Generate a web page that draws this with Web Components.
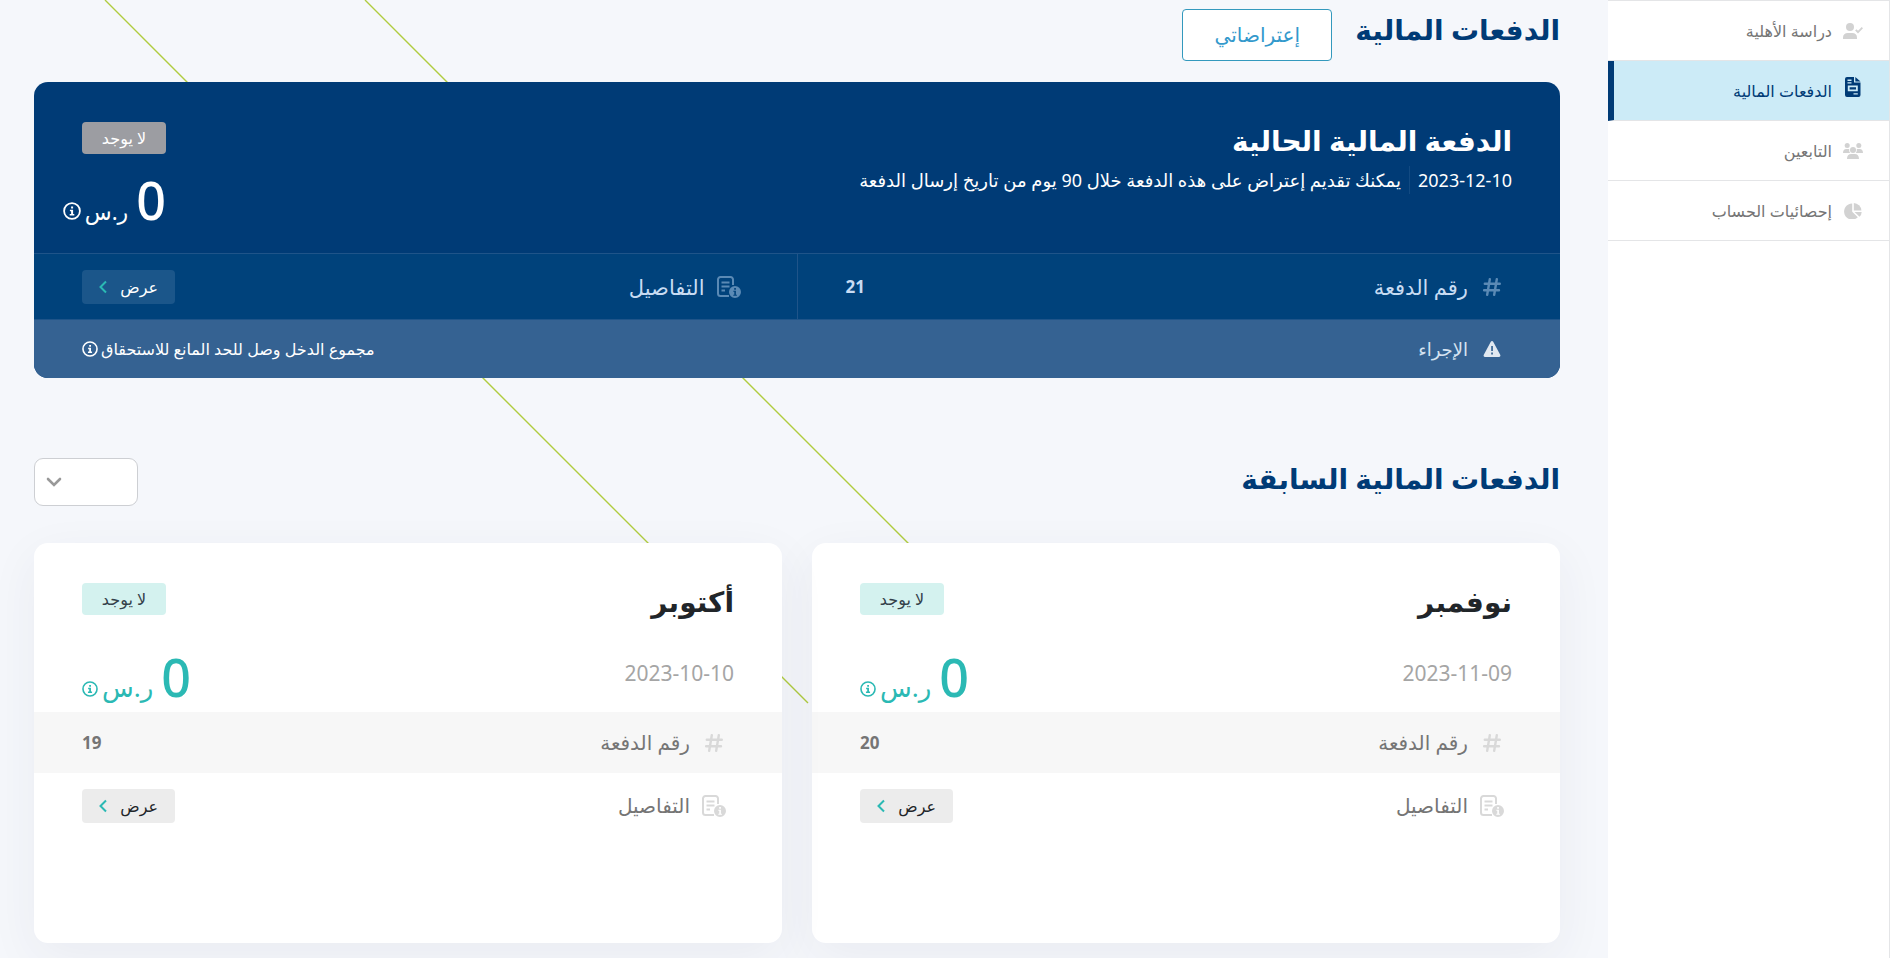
<!DOCTYPE html>
<html lang="ar" dir="rtl">
<head>
    <meta charset="utf-8">
    <meta name="viewport" content="width=device-width, initial-scale=1">
    <title>الدفعات المالية</title>
    <style>
        * {
            box-sizing: border-box;
        }
        body {
            margin: 0;
            min-height: 100vh;
            overflow-x: hidden;
            background: #f5f7fb;
            color: #212529;
            font-family: "Noto Sans", "DejaVu Sans", sans-serif;
            font-size: 16px;
            line-height: 24px;
        }
    </style>
</head>
<body>
    <payments-page></payments-page>

    <script>
        const ICONS = {
            'user-check': {
                box: '0 0 20 16',
                body: `<circle cx="7" cy="4" r="4"/>
                    <path d="M0 16v-1.6C0 11.600 2 10 4.600 10h4.800C12 10 14 11.600 14 14.400V16z"/>
                    <path d="M12.800 6.800l2.200 2.400 4.400-4.600" fill="none" stroke="currentColor" stroke-width="1.900"/>`,
            },
            invoice: {
                box: '0 0 20 28',
                body: `<path fill-rule="evenodd" d="M4 0h7v5.500h6.500V18a2 2 0 0 1-2 2H4a2 2 0 0 1-2-2V2a2 2 0 0 1 2-2zM4.500 2.600v1.400h4V2.600zM4.500 5.200v1.400h4V5.200zM4.800 8.400v5.800h10V8.400zM6.600 10.200h6.400v2.200H6.600zM10.500 16.200v1.400h4.300v-1.400z"/>
                    <path d="M12.300 0l5.200 4.400h-5.200z"/>`,
            },
            users: {
                box: '0 0 20 16',
                body: `<circle cx="4.200" cy="2.600" r="2.500"/><circle cx="15.800" cy="2.600" r="2.500"/><circle cx="10" cy="7" r="3"/>
                    <path d="M0 10c0-2.600 1.200-4 3.400-4h1.800c.4 0 .8.1 1.100.2-.3 1.600.1 2.800 1 3.800zM20 10c0-2.600-1.200-4-3.400-4h-1.800c-.4 0-.8.1-1.100.2.3 1.600-.1 2.800-1 3.800zM4 16c0-3.200 1.600-5 4.200-5h3.600c2.600 0 4.200 1.800 4.200 5z"/>`,
            },
            pie: {
                box: '0 0 20 16',
                body: `<path d="M9.200.6v8.200l5.600 5.400A8 8 0 1 1 9.200.6z"/>
                    <path d="M10.800 0a8 8 0 0 1 7.600 7.400h-7.600z"/>
                    <path d="M11.500 9h7.200a7 7 0 0 1-2.200 4.800z"/>`,
            },
            hash: {
                box: '0 0 18 18',
                body: `<path d="M6.800 1.200L4.200 16.800M13.800 1.200l-2.600 15.600M1.800 5.800h15M1 12.200h15" fill="none" stroke="currentColor" stroke-width="2.400" stroke-linecap="round"/>`,
            },
            details: {
                box: '0 0 24 22',
                body: `<path d="M12 20H3.500A2.500 2.500 0 0 1 1 17.500v-14A2.500 2.500 0 0 1 3.500 1h10A2.500 2.500 0 0 1 16 3.500V9" fill="none" stroke="currentColor" stroke-width="2"/>
                    <path d="M4.500 6.500h8M4.500 10.500h8M4.500 14.500h3.500" stroke="currentColor" stroke-width="1.800"/>
                    <path fill-rule="evenodd" d="M18 10a6 6 0 1 1 0 12 6 6 0 0 1 0-12zM17.200 12v1.700h1.700V12zM16.300 14.800v1h1v2.900h-1v1h3.600v-1h-1v-3.900z"/>`,
            },
            warning: {
                box: '0 0 18 16',
                body: `<path fill-rule="evenodd" d="M9 0c.5 0 .9.300 1.200.8l7 12.900c.6 1.100 0 2.300-1.200 2.300H2c-1.200 0-1.800-1.200-1.200-2.300l7-12.900C8.100.3 8.500 0 9 0zM8.200 5v5h1.700V5zM8.200 11.600v1.800h1.700v-1.800z"/>`,
            },
            info: {
                box: '0 0 18 18',
                body: `<circle cx="9" cy="9" r="7.900" fill="none" stroke="currentColor" stroke-width="1.800"/>
                    <path d="M8.100 4.400h2v2h-2zM6.900 7.700h3.200v4.200h1.200v1.500H6.700v-1.500h1.400V9.200H6.900z"/>`,
            },
            chevron: {
                box: '0 0 8 14',
                body: `<path d="M7 1.500L1.500 7 7 12.500" fill="none" stroke="currentColor" stroke-width="2"/>`,
            },
            'chevron-down': {
                box: '0 0 16 10',
                body: `<path d="M2 2l6 6 6-6" fill="none" stroke="currentColor" stroke-width="2.600" stroke-linecap="round"/>`,
            },
        };

        class AppIcon extends HTMLElement {
            constructor() {
                super();
                this.root = this.attachShadow({ mode: 'open' });
            }
            connectedCallback() {
                const { box, body } = ICONS[this.getAttribute('name')];
                const [, , width, height] = box.split(' ');
                this.root.innerHTML = /*html*/`
                    <style>
                        :host {
                            display: inline-flex;
                            flex: none;
                        }
                        svg {
                            display: block;
                            width: var(--icon-size, ${width}px);
                            height: var(--icon-size, ${height}px);
                        }
                    </style>
                    <svg viewBox="${box}" fill="currentColor" aria-hidden="true">${body}</svg>
                `;
            }
        }
        window.customElements.define('app-icon', AppIcon);

        class NavItem extends HTMLElement {
            constructor() {
                super();
                this.root = this.attachShadow({ mode: 'open' });
                this.root.innerHTML = /*html*/`
                    <style>
                        :host {
                            display: block;
                            box-sizing: border-box;
                            height: 60px;
                            border-bottom: 1px solid #e4e5e7;
                            color: #757575;
                        }
                        a {
                            display: flex;
                            align-items: center;
                            gap: 11px;
                            height: 100%;
                            padding: 0 26px;
                            box-sizing: border-box;
                            color: inherit;
                            text-decoration: none;
                        }
                        app-icon {
                            color: #d2d2d2;
                        }
                        :host([active]) {
                            background: #ccebf7;
                            border-inline-end: 6px solid #003b76;
                            color: #003b76;
                        }
                        :host([active]) app-icon {
                            color: #003b76;
                        }
                    </style>
                    <a href="#"><app-icon name="${this.getAttribute('icon')}"></app-icon><slot></slot></a>
                `;
            }
        }
        window.customElements.define('nav-item', NavItem);

        class SideNav extends HTMLElement {
            constructor() {
                super();
                this.root = this.attachShadow({ mode: 'open' });
                this.root.innerHTML = /*html*/`
                    <style>
                        :host {
                            display: block;
                            background: white;
                            border: solid #e4e5e7;
                            border-width: 1px 1px 0 0;
                        }
                    </style>
                    <nav><slot></slot></nav>
                `;
            }
        }
        window.customElements.define('side-nav', SideNav);

        class StatusBadge extends HTMLElement {
            constructor() {
                super();
                this.root = this.attachShadow({ mode: 'open' });
                this.root.innerHTML = /*html*/`
                    <style>
                        :host {
                            display: inline-block;
                            min-width: 84px;
                            padding: 4px 16px;
                            box-sizing: border-box;
                            border-radius: 4px;
                            background: var(--badge-bg, #d4f2ef);
                            color: var(--badge-color, #33404a);
                            text-align: center;
                            white-space: nowrap;
                        }
                    </style>
                    <slot></slot>
                `;
            }
        }
        window.customElements.define('status-badge', StatusBadge);

        class MoneyAmount extends HTMLElement {
            constructor() {
                super();
                this.root = this.attachShadow({ mode: 'open' });
                this.root.innerHTML = /*html*/`
                    <style>
                        :host {
                            display: flex;
                            align-items: baseline;
                            white-space: nowrap;
                            line-height: 52px;
                        }
                        .value {
                            font-size: 52px;
                            font-weight: 500;
                            margin-inline-end: 8px;
                        }
                        .unit {
                            font-size: var(--unit-size, 26px);
                            margin-inline-end: 4px;
                        }
                    </style>
                    <span class="value"><slot></slot></span>
                    <span class="unit">ر.س</span>
                    <app-icon name="info"></app-icon>
                `;
            }
        }
        window.customElements.define('money-amount', MoneyAmount);

        class ViewButton extends HTMLElement {
            constructor() {
                super();
                this.root = this.attachShadow({ mode: 'open' });
                this.root.innerHTML = /*html*/`
                    <style>
                        button {
                            display: flex;
                            align-items: center;
                            justify-content: space-between;
                            width: 93px;
                            height: 34px;
                            padding: 0 17px;
                            border: 0;
                            border-radius: 4px;
                            background: var(--button-bg, #ececec);
                            color: var(--button-color, #212529);
                            font: inherit;
                            font-size: 16px;
                            cursor: pointer;
                        }
                        app-icon {
                            color: #2bb9b4;
                        }
                    </style>
                    <button type="button"><slot></slot><app-icon name="chevron"></app-icon></button>
                `;
            }
        }
        window.customElements.define('view-button', ViewButton);

        // icon + label at the start of the row, whatever is slotted at the end
        class InfoRow extends HTMLElement {
            constructor() {
                super();
                this.root = this.attachShadow({ mode: 'open' });
                this.root.innerHTML = /*html*/`
                    <style>
                        :host {
                            display: flex;
                            align-items: center;
                            justify-content: space-between;
                            flex: 1;
                            box-sizing: border-box;
                            padding: 0 48px;
                            color: #757575;
                            font-size: 20px;
                        }
                        .label {
                            display: flex;
                            align-items: center;
                            gap: 4px;
                        }
                        .icon {
                            display: flex;
                            justify-content: center;
                            width: 40px;
                            color: var(--row-icon, #d9d9d9);
                        }
                    </style>
                    <div class="label">
                        <span class="icon"><app-icon name="${this.getAttribute('icon')}"></app-icon></span>
                        <span>${this.getAttribute('label')}</span>
                    </div>
                    <slot></slot>
                `;
            }
        }
        window.customElements.define('info-row', InfoRow);

        class CurrentPayment extends HTMLElement {
            constructor() {
                super();
                this.root = this.attachShadow({ mode: 'open' });
                this.root.innerHTML = /*html*/`
                    <style>
                        :host {
                            --badge-bg: #9c9da2;
                            --badge-color: white;
                            --button-bg: #1b568a;
                            --button-color: white;
                            --unit-size: 22px;
                            display: block;
                            overflow: hidden;
                            border-radius: 14px;
                            background: #003b76;
                            color: white;
                        }
                        .top {
                            display: flex;
                            justify-content: space-between;
                            min-height: 171px;
                            box-sizing: border-box;
                            padding: 40px 48px 0;
                        }
                        h2 {
                            margin: 0;
                            font-size: 28px;
                            line-height: 36px;
                        }
                        .meta {
                            display: flex;
                            font-size: 18px;
                            line-height: 28px;
                            margin: 8px 0 0;
                        }
                        time {
                            padding-inline-end: 8px;
                            margin-inline-end: 8px;
                            border-inline-end: 1px solid #124a82;
                        }
                        .state {
                            width: 84px;
                        }
                        money-amount {
                            margin-top: 20px;
                        }
                        .columns {
                            display: flex;
                            height: 67px;
                            box-sizing: border-box;
                            border: solid #1f5489;
                            border-width: 1px 0;
                            background: #00427b;
                        }
                        .columns info-row {
                            --row-icon: #5b8ab5;
                            font-size: 21px;
                            color: #c8dcf3;
                        }
                        .columns info-row + info-row {
                            border-inline-start: 1px solid #1f5489;
                        }
                        b {
                            font-size: 17px;
                        }
                        .action {
                            --row-icon: #e1e8f0;
                            height: 58px;
                            background: #356292;
                            color: #d5e3f1;
                            font-size: 18px;
                        }
                        .reason {
                            --icon-size: 16px;
                            display: flex;
                            align-items: center;
                            gap: 3px;
                            color: white;
                            font-size: 16px;
                        }
                    </style>
                    <div class="top">
                        <div>
                            <h2>الدفعة المالية الحالية</h2>
                            <p class="meta"><time>2023-12-10</time><span>يمكنك تقديم إعتراض على هذه الدفعة خلال 90 يوم من تاريخ إرسال الدفعة</span></p>
                        </div>
                        <div class="state">
                            <status-badge>لا يوجد</status-badge>
                            <money-amount>0</money-amount>
                        </div>
                    </div>
                    <div class="columns">
                        <info-row icon="hash" label="رقم الدفعة"><b>21</b></info-row>
                        <info-row icon="details" label="التفاصيل"><view-button>عرض</view-button></info-row>
                    </div>
                    <info-row class="action" icon="warning" label="الإجراء">
                        <span class="reason">مجموع الدخل وصل للحد المانع للاستحقاق <app-icon name="info"></app-icon></span>
                    </info-row>
                `;
            }
        }
        window.customElements.define('current-payment', CurrentPayment);

        class PaymentCard extends HTMLElement {
            constructor() {
                super();
                this.root = this.attachShadow({ mode: 'open' });
                this.root.innerHTML = /*html*/`
                    <style>
                        :host {
                            display: block;
                            min-height: 400px;
                            box-sizing: border-box;
                            border-radius: 14px;
                            background: white;
                            box-shadow: 0 14px 50px rgba(50, 50, 80, 0.06);
                        }
                        .top {
                            display: flex;
                            justify-content: space-between;
                            height: 169px;
                            box-sizing: border-box;
                            padding: 40px 48px 0;
                        }
                        h3 {
                            margin: 0;
                            font-size: 28px;
                            line-height: 36px;
                        }
                        time {
                            display: block;
                            margin-top: 38px;
                            color: #a5a5a5;
                            font-size: 21px;
                            line-height: 32px;
                        }
                        .state {
                            display: flex;
                            flex-direction: column;
                            align-items: flex-end;
                        }
                        money-amount {
                            --icon-size: 16px;
                            margin-top: 36px;
                            color: #2bb9b4;
                        }
                        info-row {
                            height: 61px;
                        }
                        .number {
                            background: #f7f7f7;
                        }
                        .details {
                            height: 66px;
                        }
                        b {
                            font-size: 17px;
                        }
                    </style>
                    <div class="top">
                        <div>
                            <h3>${this.getAttribute('month')}</h3>
                            <time>${this.getAttribute('date')}</time>
                        </div>
                        <div class="state">
                            <status-badge>لا يوجد</status-badge>
                            <money-amount>${this.getAttribute('amount')}</money-amount>
                        </div>
                    </div>
                    <info-row class="number" icon="hash" label="رقم الدفعة"><b>${this.getAttribute('number')}</b></info-row>
                    <info-row class="details" icon="details" label="التفاصيل"><view-button>عرض</view-button></info-row>
                `;
            }
        }
        window.customElements.define('payment-card', PaymentCard);

        class YearPicker extends HTMLElement {
            constructor() {
                super();
                this.root = this.attachShadow({ mode: 'open' });
                this.root.innerHTML = /*html*/`
                    <style>
                        :host {
                            display: grid;
                            align-items: center;
                            width: 104px;
                            height: 48px;
                        }
                        select, app-icon {
                            grid-area: 1 / 1;
                        }
                        select {
                            appearance: none;
                            width: 100%;
                            height: 100%;
                            padding: 0 14px;
                            border: 1px solid #cdcfd3;
                            border-radius: 9px;
                            background: white;
                            font: inherit;
                        }
                        app-icon {
                            justify-self: end;
                            margin-inline-end: 12px;
                            color: #999;
                            pointer-events: none;
                        }
                    </style>
                    <select aria-label="السنة"><option></option></select>
                    <app-icon name="chevron-down"></app-icon>
                `;
            }
        }
        window.customElements.define('year-picker', YearPicker);

        class PaymentsPage extends HTMLElement {
            constructor() {
                super();
                this.root = this.attachShadow({ mode: 'open' });
                this.root.innerHTML = /*html*/`
                    <style>
                        :host {
                            display: grid;
                            grid-template-columns: 282px 1fr;
                            min-height: 100vh;
                        }
                        side-nav {
                            z-index: 1;
                        }
                        main {
                            position: relative;
                            padding: 9px 48px 15px 34px;
                        }
                        /* thin diagonal strokes behind the cards */
                        .lines {
                            position: absolute;
                            top: 0;
                            left: 0;
                            z-index: -1;
                            width: 910px;
                            height: 704px;
                        }
                        .head {
                            display: flex;
                            align-items: flex-start;
                            gap: 23px;
                            min-height: 73px;
                        }
                        h1 {
                            margin: 0;
                            color: #003b76;
                            font-size: 28px;
                            line-height: 40px;
                        }
                        .outline {
                            width: 150px;
                            height: 52px;
                            border: 1px solid #3399bd;
                            border-radius: 4px;
                            background: white;
                            color: #3399cc;
                            font: inherit;
                            font-size: 20px;
                            cursor: pointer;
                        }
                        .previous {
                            justify-content: space-between;
                            min-height: 85px;
                            margin-top: 80px;
                        }
                        .cards {
                            display: grid;
                            grid-template-columns: 1fr 1fr;
                            gap: 30px;
                        }
                    </style>
                    <side-nav>
                        <nav-item icon="user-check">دراسة الأهلية</nav-item>
                        <nav-item icon="invoice" active>الدفعات المالية</nav-item>
                        <nav-item icon="users">التابعين</nav-item>
                        <nav-item icon="pie">إحصائيات الحساب</nav-item>
                    </side-nav>
                    <main>
                        <svg class="lines" viewBox="0 0 910 704" fill="none" stroke="#b0cc3f" stroke-width="1.400" aria-hidden="true">
                            <path d="M105 0l703 703M365 0l545 545"/>
                        </svg>
                        <div class="head">
                            <h1>الدفعات المالية</h1>
                            <button class="outline" type="button">إعتراضاتي</button>
                        </div>
                        <current-payment></current-payment>
                        <div class="head previous">
                            <h1>الدفعات المالية السابقة</h1>
                            <year-picker></year-picker>
                        </div>
                        <div class="cards">
                            <payment-card month="نوفمبر" date="2023-11-09" amount="0" number="20"></payment-card>
                            <payment-card month="أكتوبر" date="2023-10-10" amount="0" number="19"></payment-card>
                        </div>
                    </main>
                `;
            }
        }
        window.customElements.define('payments-page', PaymentsPage);
    </script>
</body>
</html>
